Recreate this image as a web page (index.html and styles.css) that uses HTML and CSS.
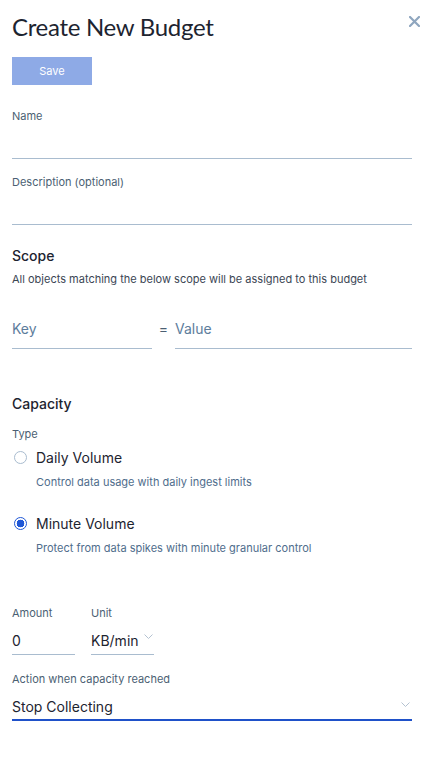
FILE: index.html
```html
<!DOCTYPE html>
<html>
<head>
<meta charset="utf-8">
<link rel="stylesheet" href="styles.css">
</head>
<body>
<div class="page">
  <div class="header">
    <h1 class="title">Create New Budget</h1>
    <span class="close">
      <svg width="11" height="11" viewBox="0 0 11 11"><path d="M1 1L10 10M10 1L1 10" stroke="#8fa6bf" stroke-width="2.2" stroke-linecap="round"/></svg>
    </span>
  </div>
  <button class="save">Save</button>

  <div class="label first">Name</div>
  <div class="field"></div>
  <div class="label">Description (optional)</div>
  <div class="field"></div>

  <div class="heading scope">Scope</div>
  <div class="subtext">All objects matching the below scope will be assigned to this budget</div>
  <div class="kv">
    <div class="kfield key">Key</div>
    <div class="eq">=</div>
    <div class="kfield value">Value</div>
  </div>

  <div class="heading capacity">Capacity</div>
  <div class="label type">Type</div>
  <div class="radio-row">
    <span class="radio"></span>
    <span class="radio-text">Daily Volume</span>
  </div>
  <div class="radio-desc">Control data usage with daily ingest limits</div>
  <div class="radio-row second">
    <span class="radio checked"></span>
    <span class="radio-text">Minute Volume</span>
  </div>
  <div class="radio-desc">Protect from data spikes with minute granular control</div>

  <div class="amount-row">
    <div class="col">
      <div class="label">Amount</div>
      <div class="small-field">0</div>
    </div>
    <div class="col">
      <div class="label">Unit</div>
      <div class="small-field select">KB/min
        <svg class="chev" width="9" height="5" viewBox="0 0 9 5"><path d="M0.5 0.5L4.5 4.5L8.5 0.5" fill="none" stroke="#b4c2d1" stroke-width="1"/></svg>
      </div>
    </div>
  </div>
  <div class="label action">Action when capacity reached</div>
  <div class="action-field">Stop Collecting
    <svg class="chev" width="9" height="5" viewBox="0 0 9 5"><path d="M0.5 0.5L4.5 4.5L8.5 0.5" fill="none" stroke="#b4c2d1" stroke-width="1"/></svg>
  </div>
</div>
</body>
</html>
```

FILE: styles.css
```css
* { box-sizing: border-box; }
html, body { margin: 0; padding: 0; background: #fff; }
body { font-family: Inter, "Noto Sans", sans-serif; color: #1d2430; }
.page { width: 440px; padding: 0 28px 0 12px; }
.header { display: flex; justify-content: space-between; align-items: flex-start; margin-right: -8px; padding-top: 13px; }
.title { margin: 0; font-family: Lato, Inter, sans-serif; font-size: 24px; font-weight: 400; line-height: 28px; letter-spacing: -0.3px; color: #1d2430; }
.close { display: block; width: 11px; height: 11px; margin-top: 3px; }
.close svg { display: block; }
.save { display: block; margin-top: 16px; width: 80px; height: 28px; border: 0; padding: 0; background: #8eaae6; color: #fff; font-family: inherit; font-size: 11px; }
.label { font-size: 11px; line-height: 16px; color: #4b5f73; }
.label.first { margin-top: 23px; }
.field { height: 35px; border-bottom: 1px solid #a9bccf; margin-bottom: 15px; }
.heading { font-size: 14px; font-weight: 500; line-height: 20px; color: #1d2430; }
.heading.scope { margin-top: 21px; }
.subtext { margin-top: 5px; font-size: 11px; line-height: 16px; color: #3b4654; }
.kv { display: flex; align-items: flex-end; margin-top: 23px; }
.kfield { height: 39px; padding-top: 9px; font-size: 14px; line-height: 20px; color: #5d7d9c; border-bottom: 1px solid #a9bccf; }
.key { width: 140px; }
.eq { width: 23px; text-align: center; font-size: 14px; line-height: 20px; padding-bottom: 10px; color: #4b5f73; }
.value { flex: 1; }
.heading.capacity { margin-top: 45px; }
.label.type { margin-top: 12px; }
.radio-row { display: flex; align-items: center; margin-top: 6px; height: 20px; }
.radio-row.second { margin-top: 24px; }
.radio { width: 13px; height: 13px; border-radius: 50%; border: 1px solid #a9bccf; margin-left: 2px; margin-right: 9px; margin-top: -2px; }
.radio.checked { border: 1.5px solid #1f57d6; background: radial-gradient(circle, #1f57d6 0 3.6px, #fff 4.1px); }
.radio-text { font-size: 14px; line-height: 20px; color: #1d2430; }
.radio-desc { margin-top: 6px; padding-left: 24px; font-size: 11px; line-height: 16px; color: #4f6d8c; }
.amount-row { display: flex; gap: 16px; margin-top: 49px; }
.col { width: 63px; }
.small-field { position: relative; height: 34px; padding-top: 10px; font-size: 14px; line-height: 20px; color: #1d2430; border-bottom: 1px solid #a9bccf; }
.small-field .chev { position: absolute; right: 1px; top: 13px; }
.label.action { margin-top: 16px; }
.action-field { position: relative; height: 34px; padding-top: 10px; font-size: 14px; line-height: 20px; color: #1d2430; border-bottom: 2px solid #1f51c9; }
.action-field .chev { position: absolute; right: 2px; top: 15px; }
```
